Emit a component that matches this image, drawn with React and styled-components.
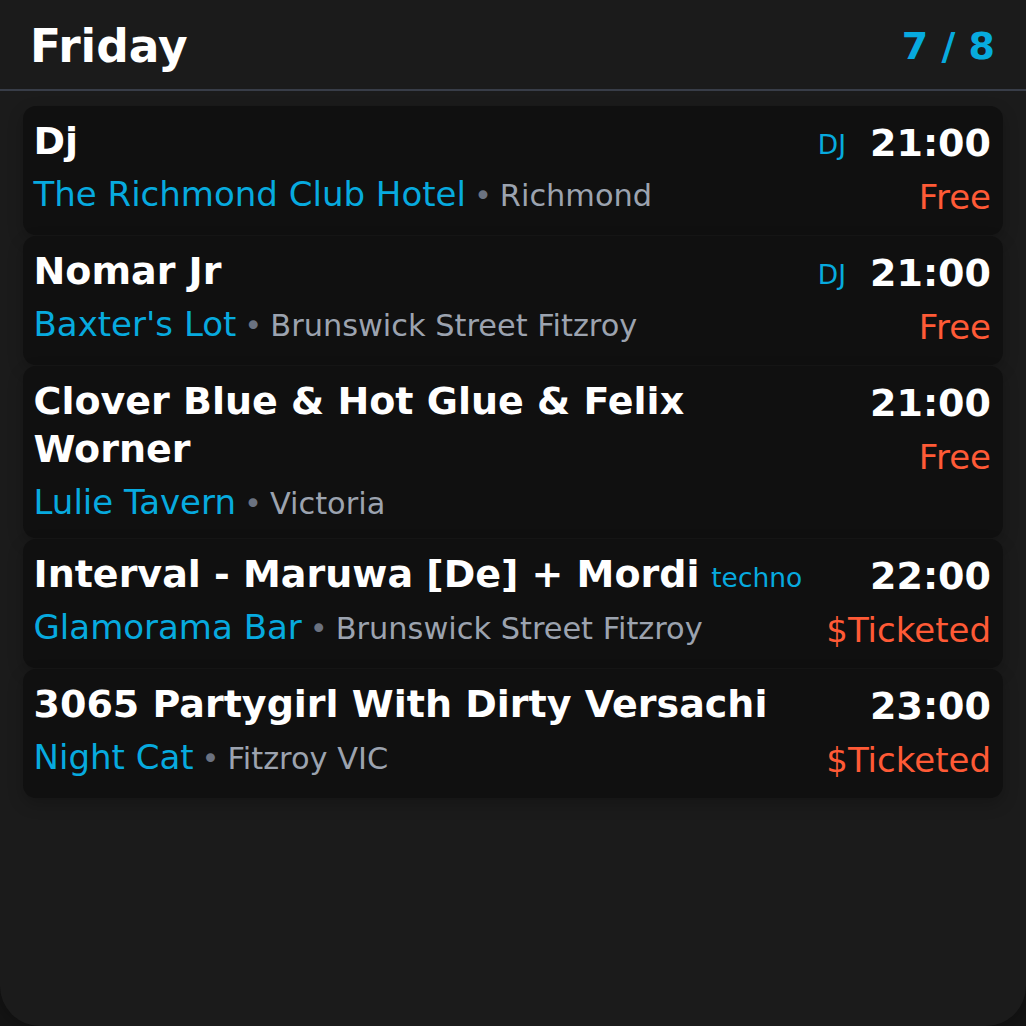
import React from 'react'
import styled, { createGlobalStyle } from 'styled-components'

const GlobalStyle = createGlobalStyle`
  html, body {
    margin: 0;
    padding: 0;
    background: #141414;
  }
  body {
    font-family: "DejaVu Sans", "Noto Sans", sans-serif;
    color: #ffffff;
  }
`

const Panel = styled.main`
  min-height: 100vh;
  box-sizing: border-box;
  background: #1b1b1b;
  border-radius: 0 0 40px 40px;
  box-shadow: 0 0 18px rgba(0, 0, 0, 0.35);
  overflow: hidden;
`

const Header = styled.header`
  height: 91px;
  box-sizing: border-box;
  padding: 3px 31px 0 30px;
  display: flex;
  align-items: center;
  justify-content: space-between;
  border-bottom: 2px solid #383d48;
`

const DayTitle = styled.h1`
  margin: 0;
  font-size: 45.5px;
  font-weight: 700;
  color: #ffffff;
`

const Counter = styled.span`
  font-size: 38px;
  font-weight: 700;
  color: #07aadf;
`

const List = styled.section`
  padding: 15px 23px;
  display: flex;
  flex-direction: column;
  gap: 1px;
`

const Card = styled.article`
  display: grid;
  grid-template-columns: 1fr auto;
  column-gap: 24px;
  padding: 11px 12px 11px 10.5px;
  background: #101010;
  border-radius: 13px;
  box-shadow: 0 6px 16px rgba(0, 0, 0, 0.22);
`

const Main = styled.div`
  min-width: 0;
`

const TitleRow = styled.div`
  display: flex;
  align-items: baseline;
  justify-content: space-between;
  gap: 6px;
`

const Title = styled.h2`
  margin: 0;
  font-size: 38px;
  line-height: 48px;
  font-weight: 700;
  color: #ffffff;
`

const Tag = styled.span`
  flex-shrink: 0;
  font-size: 26.5px;
  color: #07aadf;
`

const Place = styled.div`
  margin-top: 3.5px;
  font-size: 34px;
  line-height: 50.5px;
  white-space: nowrap;
`

const Venue = styled.span`
  color: #07aadf;
`

const Dot = styled.span`
  font-size: 30.4px;
  line-height: 1;
  color: #6b7280;
  margin: 0 8px;
`

const Address = styled.span`
  font-size: 30.4px;
  line-height: 1;
  color: #9ca3af;
`

const Side = styled.div`
  display: flex;
  flex-direction: column;
  align-items: flex-end;
`

const Time = styled.div`
  font-size: 38px;
  line-height: 53px;
  font-weight: 700;
  color: #ffffff;
`

const Price = styled.div`
  font-size: 34px;
  line-height: 54px;
  color: #ff5a36;
`

const events = [
  { title: 'Dj', tag: 'DJ', venue: 'The Richmond Club Hotel', address: 'Richmond', time: '21:00', price: 'Free' },
  { title: 'Nomar Jr', tag: 'DJ', venue: "Baxter's Lot", address: 'Brunswick Street Fitzroy', time: '21:00', price: 'Free' },
  { title: 'Clover Blue & Hot Glue & Felix Worner', venue: 'Lulie Tavern', address: 'Victoria', time: '21:00', price: 'Free' },
  { title: 'Interval - Maruwa [De] + Mordi', tag: 'techno', venue: 'Glamorama Bar', address: 'Brunswick Street Fitzroy', time: '22:00', price: '$Ticketed' },
  { title: '3065 Partygirl With Dirty Versachi', venue: 'Night Cat', address: 'Fitzroy VIC', time: '23:00', price: '$Ticketed' },
]

const EventCard = ({ event }) => (
  <Card>
    <Main>
      <TitleRow>
        <Title>{event.title}</Title>
        {event.tag && <Tag>{event.tag}</Tag>}
      </TitleRow>
      <Place>
        <Venue>{event.venue}</Venue>
        <Dot>•</Dot>
        <Address>{event.address}</Address>
      </Place>
    </Main>
    <Side>
      <Time>{event.time}</Time>
      <Price>{event.price}</Price>
    </Side>
  </Card>
)

export default function App() {
  return (
    <>
      <GlobalStyle />
      <Panel>
        <Header>
          <DayTitle>Friday</DayTitle>
          <Counter>7 / 8</Counter>
        </Header>
        <List>
          {events.map((event, i) => (
            <EventCard key={i} event={event} />
          ))}
        </List>
      </Panel>
    </>
  )
}
